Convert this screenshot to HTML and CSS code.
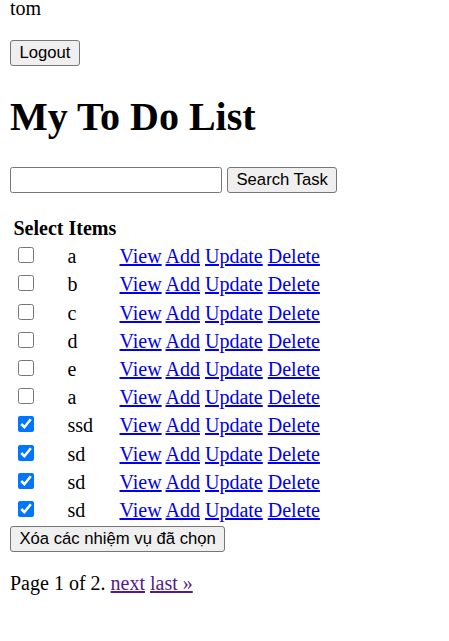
FILE: index.html
```html
<!DOCTYPE html>
<html>
<head>
<meta charset="utf-8">
<title>My To Do List</title>
<link rel="stylesheet" href="styles.css">
</head>
<body>
<div class="user">tom</div>
<form class="logout-form"><button type="button" class="btn">Logout</button></form>
<h1 class="title">My To Do List</h1>
<form class="search-form"><input type="text" class="search-input"> <button type="button" class="btn">Search Task</button></form>
<form class="list-form">
<table class="tasks">
<tr><th class="head" colspan="3">Select Items</th></tr>
<tr><td class="c1"><input type="checkbox" class="chk"></td><td class="c2">a</td><td class="c3"><a href="#" class="lnk">View</a> <a href="#" class="lnk">Add</a> <a href="#" class="lnk">Update</a> <a href="#" class="lnk">Delete</a></td></tr>
<tr><td class="c1"><input type="checkbox" class="chk"></td><td class="c2">b</td><td class="c3"><a href="#" class="lnk">View</a> <a href="#" class="lnk">Add</a> <a href="#" class="lnk">Update</a> <a href="#" class="lnk">Delete</a></td></tr>
<tr><td class="c1"><input type="checkbox" class="chk"></td><td class="c2">c</td><td class="c3"><a href="#" class="lnk">View</a> <a href="#" class="lnk">Add</a> <a href="#" class="lnk">Update</a> <a href="#" class="lnk">Delete</a></td></tr>
<tr><td class="c1"><input type="checkbox" class="chk"></td><td class="c2">d</td><td class="c3"><a href="#" class="lnk">View</a> <a href="#" class="lnk">Add</a> <a href="#" class="lnk">Update</a> <a href="#" class="lnk">Delete</a></td></tr>
<tr><td class="c1"><input type="checkbox" class="chk"></td><td class="c2">e</td><td class="c3"><a href="#" class="lnk">View</a> <a href="#" class="lnk">Add</a> <a href="#" class="lnk">Update</a> <a href="#" class="lnk">Delete</a></td></tr>
<tr><td class="c1"><input type="checkbox" class="chk"></td><td class="c2">a</td><td class="c3"><a href="#" class="lnk">View</a> <a href="#" class="lnk">Add</a> <a href="#" class="lnk">Update</a> <a href="#" class="lnk">Delete</a></td></tr>
<tr><td class="c1"><input type="checkbox" class="chk" checked></td><td class="c2">ssd</td><td class="c3"><a href="#" class="lnk">View</a> <a href="#" class="lnk">Add</a> <a href="#" class="lnk">Update</a> <a href="#" class="lnk">Delete</a></td></tr>
<tr><td class="c1"><input type="checkbox" class="chk" checked></td><td class="c2">sd</td><td class="c3"><a href="#" class="lnk">View</a> <a href="#" class="lnk">Add</a> <a href="#" class="lnk">Update</a> <a href="#" class="lnk">Delete</a></td></tr>
<tr><td class="c1"><input type="checkbox" class="chk" checked></td><td class="c2">sd</td><td class="c3"><a href="#" class="lnk">View</a> <a href="#" class="lnk">Add</a> <a href="#" class="lnk">Update</a> <a href="#" class="lnk">Delete</a></td></tr>
<tr><td class="c1"><input type="checkbox" class="chk" checked></td><td class="c2">sd</td><td class="c3"><a href="#" class="lnk">View</a> <a href="#" class="lnk">Add</a> <a href="#" class="lnk">Update</a> <a href="#" class="lnk">Delete</a></td></tr>
</table>
<button type="button" class="btn">Xóa các nhiệm vụ đã chọn</button>
</form>
<p class="pager">Page 1 of 2. <a href="#" class="lnk visited">next</a> <a href="#" class="lnk visited">last »</a></p>
</body>
</html>
```
FILE: styles.css
```css
html, body {
  background: #fff;
}
body {
  margin: 0 10px;
  font-family: "Liberation Serif", "Times New Roman", serif;
  font-size: 20px;
  color: #000;
}
.user {
  margin-top: -3px;
  line-height: 23px;
}
.logout-form {
  margin: 20px 0 0;
  height: 26px;
}
.btn {
  box-sizing: border-box;
  height: 26px;
  margin: 0;
  padding: 0 8.5px;
  font-family: "Liberation Sans", Arial, sans-serif;
  font-size: 16.67px;
  color: #000;
  background: #efefef;
  border: 1.25px solid #767676;
  border-radius: 3px;
  vertical-align: top;
}
.title {
  margin: 27.5px 0 0;
  font-size: 40px;
  font-weight: bold;
  line-height: 46px;
}
.search-form {
  margin: 27.5px 0 0;
  height: 26px;
  line-height: 26px;
}
.search-input {
  box-sizing: border-box;
  width: 212px;
  height: 26px;
  margin: 0;
  padding: 1px 2.5px;
  border: 1.25px solid #767676;
  border-radius: 2.5px;
  font-family: "Liberation Sans", Arial, sans-serif;
  font-size: 16.67px;
  vertical-align: top;
}
.list-form {
  margin: 20px 0 0;
}
.tasks {
  border-collapse: separate;
  border-spacing: 2px;
  margin: 0 0 0.5px;
}
.head {
  text-align: left;
  font-weight: bold;
  padding: 0 1.5px;
  line-height: 26.2px;
  height: 26.2px;
}
.tasks td {
  padding: 0 1.5px;
  line-height: 26.2px;
  height: 26.2px;
  vertical-align: top;
}
.c1 {
  width: 49px;
}
.c2 {
  width: 47px;
}
.c3 {
  white-space: nowrap;
}
.chk {
  width: 16px;
  height: 16px;
  margin: 4px 3px 0 4px;
  vertical-align: top;
  accent-color: #0075ff;
}
.lnk {
  color: #0000ee;
  text-decoration: underline;
}
.visited {
  color: #551a8b;
}
.pager {
  margin: 20px 0 0;
  line-height: 23px;
}
```
